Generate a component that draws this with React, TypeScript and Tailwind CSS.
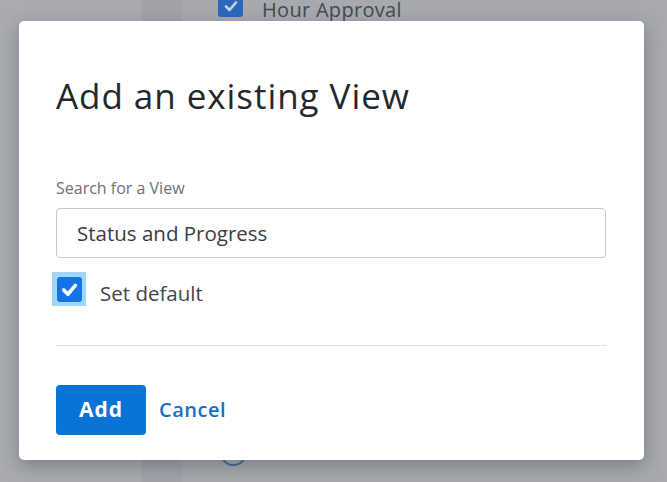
import React from "react";

export default function App() {
  return (
    <div className="relative w-[667px] h-[482px] overflow-hidden bg-[#a7a9ae] font-['Open_Sans',sans-serif]">
      {/* background page columns */}
      <div className="absolute inset-0 flex">
        <div className="w-[142px] h-full bg-[#a9abb0]" />
        <div className="w-[40px] h-full bg-[#a1a3a9]" />
        <div className="flex-1 h-full bg-[#a7a9ae]" />
      </div>

      {/* background content peeking out */}
      <div className="absolute left-[218px] top-[-9px] flex items-start gap-[19px]">
        <div className="w-[25px] h-[26px] rounded-[3px] bg-[#2c67ba] flex items-center justify-center">
          <svg width="16" height="16" viewBox="0 0 16 16" className="mt-[4px]">
            <path d="M3 8.5 L6.5 12 L13 4.5" fill="none" stroke="#c9d3e2" strokeWidth="2.6" strokeLinecap="round" strokeLinejoin="round" />
          </svg>
        </div>
        <span className="text-[20px] leading-[24px] text-[#454951] mt-[7px] tracking-[0.3px]">Hour Approval</span>
      </div>
      <div className="absolute left-[220px] top-[439px] w-[27px] h-[27px] rounded-full border-2 border-[#3d66a0]" />

      {/* modal */}
      <div className="absolute left-[19px] top-[21px] w-[625px] h-[439px] bg-white rounded-[5px] shadow-[0_6px_18px_rgba(40,45,55,0.35)] px-[37px] pt-[55px]">
        <h1 className="text-[35px] leading-[40px] text-[#24272c] font-medium tracking-[0.95px]">Add an existing View</h1>

        <div className="mt-[62px] text-[16px] leading-[20px] text-[#6c7077]">Search for a View</div>

        <div className="mt-[10px] h-[50px] w-[550px] rounded-[4px] border border-[#c6c9ce] flex items-center pl-[20px] text-[20.5px] text-[#393c41]">
          Status and Progress
        </div>

        <div className="mt-[14px] flex items-start">
          <div className="ml-[-4px] w-[34px] h-[34px] bg-[#9fd7f7] flex items-center justify-center">
            <div className="w-[25px] h-[25px] rounded-[3px] bg-[#1473e6] flex items-center justify-center">
              <svg width="19" height="19" viewBox="0 0 18 18">
                <path d="M3.5 9.5 L7.5 13.5 L14.5 5" fill="none" stroke="#ffffff" strokeWidth="3.4" strokeLinecap="round" strokeLinejoin="round" />
              </svg>
            </div>
          </div>
          <span className="ml-[14px] mt-[9px] text-[20.5px] leading-[24px] text-[#42454a]">Set default</span>
        </div>

        <div className="mt-[39px] h-px w-[550px] bg-[#e1e2e4]" />

        <div className="mt-[39px] flex items-center">
          <button className="h-[50px] w-[90px] rounded-[4px] bg-[#0a74d6] text-white text-[21px] font-bold tracking-[1px]">Add</button>
          <span className="ml-[13px] text-[20px] font-semibold tracking-[0.5px] text-[#1271c6]">Cancel</span>
        </div>
      </div>
    </div>
  );
}
